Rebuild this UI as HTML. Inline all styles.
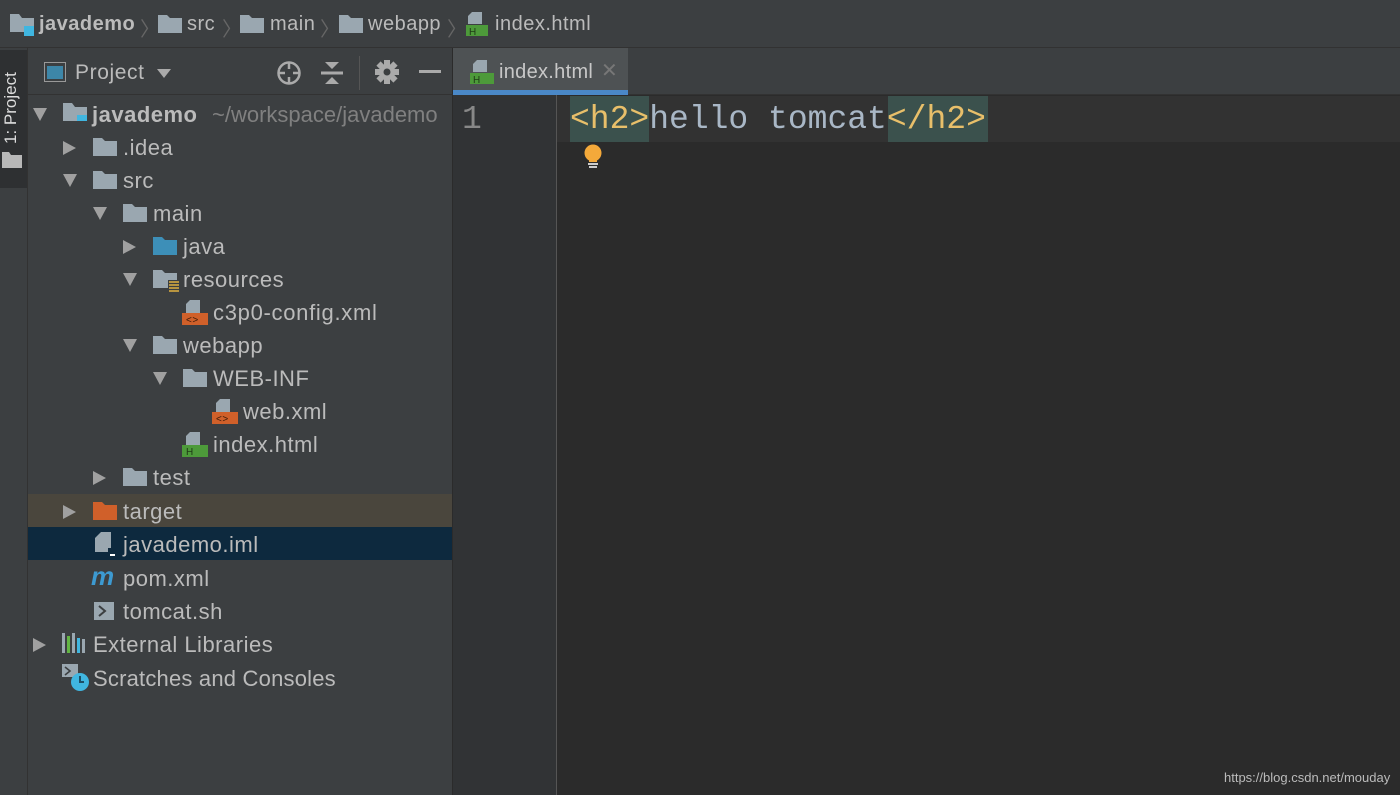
<!DOCTYPE html>
<html><head><meta charset="utf-8"><style>
*{margin:0;padding:0;box-sizing:border-box}
body{width:1400px;height:795px;overflow:hidden;background:#2b2b2b;font-family:"Liberation Sans",sans-serif;color:#bbbbbb;position:relative}
.abs{position:absolute}
#top{left:0;top:0;width:1400px;height:48px;background:#3c3f41;border-bottom:1px solid #323232}
#stripe{left:0;top:48px;width:28px;height:747px;background:#3c3f41;border-right:1px solid #323232}
#pbtn{left:0;top:50px;width:27px;height:138px;background:#2e3032}
#panel{left:28px;top:48px;width:425px;height:747px;background:#3c3f41;border-right:1px solid #2b2b2b}
#phead{left:28px;top:48px;width:425px;height:47px;border-bottom:1px solid #323232}
.crumb{font-size:20px;color:#bbbbbb;top:13px;letter-spacing:0.5px}
.row{position:absolute;left:28px;width:424px;height:33px;font-size:22px;line-height:35px;color:#bbbbbb;letter-spacing:0.5px}
.row .t{position:absolute;top:0}
.arr{position:absolute;top:11px;width:0;height:0}
.ar{border-left:13px solid #a0a0a0;border-top:7px solid transparent;border-bottom:7px solid transparent}
.ad{border-top:13px solid #a0a0a0;border-left:7px solid transparent;border-right:7px solid transparent;top:11px}
.fold{position:absolute;top:8px;width:24px;height:18px}
#tabs{left:453px;top:48px;width:947px;height:47px;background:#3c3f41;border-bottom:1px solid #323232}
#tab{left:453px;top:48px;width:175px;height:47px;background:#4e5254}
#tabline{left:453px;top:90px;width:175px;height:5px;background:#4a88c7}
#gutter{left:453px;top:95px;width:104px;height:700px;background:#313335;border-right:1px solid #555}
#curline{left:557px;top:96px;width:843px;height:46px;background:#323232}
.code{font-family:"Liberation Mono",monospace;font-size:33px;top:97px;height:46px;line-height:46px}
</style></head><body>
<div class="abs" id="top"></div>
<svg class="abs" style="left:10px;top:14px" width="26" height="22"><path d="M0 0h9l3 4h12v14H0z" fill="#9aa7b0"/><rect x="14" y="12" width="10" height="10" fill="#40b6e0"/></svg>
<div class="abs crumb" style="left:39px;font-weight:bold">javademo</div>
<div class="abs crumb" style="left:140px;color:#666">〉</div>
<svg class="abs" style="left:158px;top:15px" width="24" height="18"><path d="M0 0h9l3 3h12v15H0z" fill="#9aa7b0"/></svg>
<div class="abs crumb" style="left:187px">src</div>
<div class="abs crumb" style="left:222px;color:#666">〉</div>
<svg class="abs" style="left:240px;top:15px" width="24" height="18"><path d="M0 0h9l3 3h12v15H0z" fill="#9aa7b0"/></svg>
<div class="abs crumb" style="left:270px">main</div>
<div class="abs crumb" style="left:320px;color:#666">〉</div>
<svg class="abs" style="left:339px;top:15px" width="24" height="18"><path d="M0 0h9l3 3h12v15H0z" fill="#9aa7b0"/></svg>
<div class="abs crumb" style="left:368px">webapp</div>
<div class="abs crumb" style="left:447px;color:#666">〉</div>
<svg class="abs" style="left:466px;top:12px" width="22" height="24"><path d="M6 0h10v12H2V4z" fill="#9aa7b0"/><rect x="0" y="13" width="22" height="11" fill="#4d9a3a"/><text x="3" y="23" font-size="10" fill="#1e3a16" font-family="Liberation Sans">H</text></svg>
<div class="abs crumb" style="left:495px">index.html</div>

<div class="abs" id="stripe"></div>
<div class="abs" id="pbtn"></div>
<div class="abs" style="left:1px;top:64px;width:24px;height:80px;"><div style="transform:rotate(-90deg);transform-origin:left top;position:absolute;left:0;top:80px;width:80px;font-size:17px;color:#ddd;white-space:nowrap">1: Project</div></div>
<svg class="abs" style="left:2px;top:152px" width="20" height="16"><path d="M0 0h7l2 3h11v13H0z" fill="#b8b8b8"/></svg>

<div class="abs" id="panel"></div>
<div class="abs" id="phead"></div>
<svg class="abs" style="left:44px;top:62px" width="22" height="20"><rect x="0.5" y="0.5" width="21" height="19" fill="none" stroke="#999"/><rect x="3" y="4" width="16" height="13" fill="#3d86a8"/></svg>
<div class="abs" style="left:75px;top:61px;font-size:21px;letter-spacing:0.6px">Project</div>
<div class="abs" style="left:157px;top:69px;border-top:9px solid #aaa;border-left:7px solid transparent;border-right:7px solid transparent"></div>
<svg class="abs" style="left:276px;top:60px" width="26" height="26"><circle cx="13" cy="13" r="10.5" fill="none" stroke="#aaa" stroke-width="2.5"/><path d="M13 2v7M13 17v7M2 13h7M17 13h7" stroke="#aaa" stroke-width="2.5"/></svg>
<svg class="abs" style="left:320px;top:60px" width="24" height="26"><path d="M5 2h14l-7 7z M5 24h14l-7-7z" fill="#aaa"/><rect x="1" y="11.5" width="22" height="3" fill="#aaa"/></svg>
<div class="abs" style="left:359px;top:56px;width:1px;height:34px;background:#555"></div>
<svg class="abs" style="left:375px;top:60px" width="24" height="24"><g fill="#aaa" transform="translate(12 12)"><circle r="8"/><g id="g"><rect x="-3" y="-12" width="6" height="6"/></g><use href="#g" transform="rotate(45)"/><use href="#g" transform="rotate(90)"/><use href="#g" transform="rotate(135)"/><use href="#g" transform="rotate(180)"/><use href="#g" transform="rotate(225)"/><use href="#g" transform="rotate(270)"/><use href="#g" transform="rotate(315)"/></g><circle cx="12" cy="12" r="3.5" fill="#3c3f41"/></svg>
<div class="abs" style="left:419px;top:70px;width:22px;height:3px;background:#aaa"></div>

<div class="row" style="top:97px"><div class="arr ad" style="left:5px"></div><svg class="fold" style="left:35px;top:6px" width="26" height="22"><path d="M0 0h9l3 4h12v14H0z" fill="#9aa7b0"/><rect x="14" y="12" width="10" height="10" fill="#40b6e0"/></svg><span class="t" style="left:64px;font-weight:bold">javademo</span><span class="t" style="left:184px;color:#808080;letter-spacing:0">~/workspace/javademo</span></div>
<div class="row" style="top:130px"><div class="arr ar" style="left:35px"></div><svg class="fold" style="left:65px"><path d="M0 0h9l3 3h12v15H0z" fill="#9aa7b0"/></svg><span class="t" style="left:95px">.idea</span></div>
<div class="row" style="top:163px"><div class="arr ad" style="left:35px"></div><svg class="fold" style="left:65px"><path d="M0 0h9l3 3h12v15H0z" fill="#9aa7b0"/></svg><span class="t" style="left:95px">src</span></div>
<div class="row" style="top:196px"><div class="arr ad" style="left:65px"></div><svg class="fold" style="left:95px"><path d="M0 0h9l3 3h12v15H0z" fill="#9aa7b0"/></svg><span class="t" style="left:125px">main</span></div>
<div class="row" style="top:229px"><div class="arr ar" style="left:95px"></div><svg class="fold" style="left:125px"><path d="M0 0h9l3 3h12v15H0z" fill="#3d8fb8"/></svg><span class="t" style="left:155px">java</span></div>
<div class="row" style="top:262px"><div class="arr ad" style="left:95px"></div><svg class="fold" style="left:125px;width:28px;height:22px"><path d="M0 0h9l3 3h12v15H0z" fill="#9aa7b0"/><rect x="15" y="10" width="12" height="12" fill="#3c3f41"/><path d="M16 12h10M16 15h10M16 18h10M16 21h10" stroke="#e0b040" stroke-width="1.6"/></svg><span class="t" style="left:155px">resources</span></div>
<div class="row" style="top:295px"><svg class="abs" style="left:154px;top:5px" width="26" height="25"><path d="M8 0h10v13H4V4z" fill="#9aa7b0"/><rect x="0" y="13" width="26" height="12" fill="#d0602a"/><text x="4" y="23" font-size="10" fill="#3a1a0a" font-family="Liberation Sans">&lt;&gt;</text></svg><span class="t" style="left:185px;letter-spacing:0.7px">c3p0-config.xml</span></div>
<div class="row" style="top:328px"><div class="arr ad" style="left:95px"></div><svg class="fold" style="left:125px"><path d="M0 0h9l3 3h12v15H0z" fill="#9aa7b0"/></svg><span class="t" style="left:155px">webapp</span></div>
<div class="row" style="top:361px"><div class="arr ad" style="left:125px"></div><svg class="fold" style="left:155px"><path d="M0 0h9l3 3h12v15H0z" fill="#9aa7b0"/></svg><span class="t" style="left:185px">WEB-INF</span></div>
<div class="row" style="top:394px"><svg class="abs" style="left:184px;top:5px" width="26" height="25"><path d="M8 0h10v13H4V4z" fill="#9aa7b0"/><rect x="0" y="13" width="26" height="12" fill="#d0602a"/><text x="4" y="23" font-size="10" fill="#3a1a0a" font-family="Liberation Sans">&lt;&gt;</text></svg><span class="t" style="left:215px">web.xml</span></div>
<div class="row" style="top:427px"><svg class="abs" style="left:154px;top:5px" width="26" height="25"><path d="M8 0h10v13H4V4z" fill="#9aa7b0"/><rect x="0" y="13" width="26" height="12" fill="#4d9a3a"/><text x="4" y="23" font-size="10" fill="#1e3a16" font-family="Liberation Sans">H</text></svg><span class="t" style="left:185px">index.html</span></div>
<div class="row" style="top:460px"><div class="arr ar" style="left:65px"></div><svg class="fold" style="left:95px"><path d="M0 0h9l3 3h12v15H0z" fill="#9aa7b0"/></svg><span class="t" style="left:125px">test</span></div>
<div class="row" style="top:494px;background:#4a463d"><div class="arr ar" style="left:35px"></div><svg class="fold" style="left:65px"><path d="M0 0h9l3 3h12v15H0z" fill="#d0602a"/></svg><span class="t" style="left:95px">target</span></div>
<div class="row" style="top:527px;background:#0d293e"><svg class="abs" style="left:67px;top:5px" width="22" height="25"><path d="M6 0h10v20H0V6z" fill="#9aa7b0"/><rect x="13" y="16" width="9" height="9" fill="#0d293e"/><rect x="15" y="22" width="5" height="2" fill="#fff"/></svg><span class="t" style="left:95px">javademo.iml</span></div>
<div class="row" style="top:561px"><span class="t" style="left:63px;font-style:italic;font-weight:bold;color:#3d9ad1;font-size:26px;line-height:30px">m</span><span class="t" style="left:95px">pom.xml</span></div>
<div class="row" style="top:594px"><svg class="abs" style="left:66px;top:8px" width="20" height="18"><rect width="20" height="18" fill="#9aa7b0"/><path d="M5 4l6 5-6 5" stroke="#3c3f41" stroke-width="2" fill="none"/></svg><span class="t" style="left:95px">tomcat.sh</span></div>
<div class="row" style="top:627px"><div class="arr ar" style="left:5px"></div><svg class="abs" style="left:34px;top:6px" width="24" height="20"><rect x="0" y="0" width="3" height="20" fill="#9aa7b0"/><rect x="5" y="3" width="3" height="17" fill="#62b543"/><rect x="10" y="0" width="3" height="20" fill="#9aa7b0"/><rect x="15" y="5" width="3" height="15" fill="#40b6e0"/><rect x="20" y="6" width="3" height="14" fill="#9aa7b0"/></svg><span class="t" style="left:65px">External Libraries</span></div>
<div class="row" style="top:661px"><svg class="abs" style="left:34px;top:3px" width="28" height="28"><rect x="0" y="0" width="16" height="13" fill="#9aa7b0"/><path d="M3 3l5 4-5 4" stroke="#3c3f41" stroke-width="1.6" fill="none"/><circle cx="18" cy="18" r="9" fill="#40b6e0"/><path d="M18 12v6h4" stroke="#1d4f66" stroke-width="2" fill="none"/></svg><span class="t" style="left:65px;letter-spacing:0.2px">Scratches and Consoles</span></div>

<div class="abs" id="tabs"></div>
<div class="abs" id="tab"></div>
<div class="abs" id="tabline"></div>
<svg class="abs" style="left:470px;top:60px" width="24" height="24"><path d="M7 0h10v12H3V4z" fill="#9aa7b0"/><rect x="0" y="13" width="24" height="11" fill="#4d9a3a"/><text x="3" y="23" font-size="10" fill="#1e3a16" font-family="Liberation Sans">H</text></svg>
<div class="abs" style="left:499px;top:61px;font-size:20px;color:#c8c8c8;letter-spacing:0.3px">index.html</div>
<div class="abs" style="left:601px;top:58px;font-size:20px;color:#777">✕</div>
<div class="abs" id="gutter"></div>
<div class="abs" id="curline"></div>
<div class="abs code" style="left:462px;color:#888">1</div>
<div class="abs" style="left:570px;top:96px;width:79px;height:46px;background:#3b514d"></div>
<div class="abs" style="left:888px;top:96px;width:100px;height:46px;background:#3b514d"></div>
<div class="abs code" style="left:570px;color:#a9b7c6;white-space:pre"><span style="color:#e8bf6a">&lt;h2&gt;</span>hello tomcat<span style="color:#e8bf6a">&lt;/h2&gt;</span></div>
<svg class="abs" style="left:582px;top:144px" width="22" height="26"><circle cx="11" cy="9" r="8.5" fill="#f4a93a"/><rect x="7" y="14" width="8" height="4" fill="#f4a93a"/><rect x="6" y="19" width="10" height="2" fill="#ccc"/><rect x="7" y="22" width="8" height="2" fill="#ccc"/></svg>
<div class="abs" style="left:1224px;top:770px;font-size:13px;color:#bbb">https://blog.csdn.net/mouday</div>
</body></html>
